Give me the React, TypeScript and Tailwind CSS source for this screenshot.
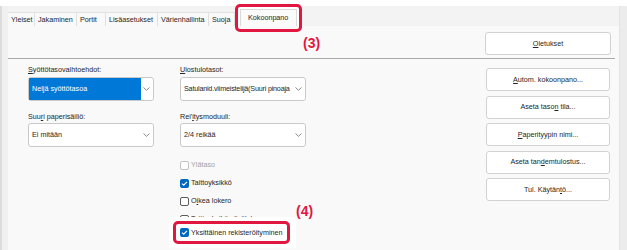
import React from 'react';

type Tab = { label: string; width: string };

const tabs: Tab[] = [
  { label: 'Yleiset', width: 'w-[27px]' },
  { label: 'Jakaminen', width: 'w-[42px]' },
  { label: 'Portit', width: 'w-[29px]' },
  { label: 'Lisäasetukset', width: 'w-[52px]' },
  { label: 'Värienhallinta', width: 'w-[51px]' },
  { label: 'Suoja', width: 'w-[26px]' },
];

const Chevron: React.FC = () => (
  <svg width="7" height="4" viewBox="0 0 7 4" className="shrink-0">
    <polyline points="0.5,0.5 3.5,3.3 6.5,0.5" fill="none" stroke="#6b6b6b" strokeWidth="0.8" />
  </svg>
);

// access key: the letter at index `at` gets an underline
const Key: React.FC<{ text: string; at: number }> = ({ text, at }) => (
  <span className="whitespace-pre">
    {text.slice(0, at)}
    <span className="underline underline-offset-[1px]">{text[at]}</span>
    {text.slice(at + 1)}
  </span>
);

const Select: React.FC<{ value: string; selected?: boolean; tight?: boolean }> = ({
  value,
  selected = false,
  tight = false,
}) => (
  <div className="flex h-[24px] w-[126px] items-stretch rounded-[3px] border border-[#c9c9c9] bg-white">
    <div
      className={
        selected
          ? 'flex flex-1 items-center overflow-hidden whitespace-nowrap bg-[#0078d7] pl-[3px] text-white'
          : tight
          ? 'flex flex-1 items-center overflow-hidden whitespace-nowrap pl-[3px] tracking-[-0.2px] text-[#262626]'
          : 'flex flex-1 items-center overflow-hidden whitespace-nowrap pl-[3px] text-[#262626]'
      }
    >
      {value}
    </div>
    <div className="flex w-[12px] items-center justify-center pr-[2px]">
      <Chevron />
    </div>
  </div>
);

const Checkbox: React.FC<{ checked?: boolean; disabled?: boolean }> = ({ checked = false, disabled = false }) =>
  checked ? (
    <div className="flex h-[9px] w-[9px] items-center justify-center rounded-[2px] bg-[#0067c0]">
      <svg width="9" height="9" viewBox="0 0 9 9">
        <polyline points="2,4.6 3.7,6.2 7,2.8" fill="none" stroke="#ffffff" strokeWidth="1.1" />
      </svg>
    </div>
  ) : (
    <div
      className={
        disabled
          ? 'h-[9px] w-[9px] rounded-[2px] border border-[#c4c4c4] bg-white'
          : 'h-[9px] w-[9px] rounded-[2px] border border-[#5c5c5c] bg-white'
      }
    />
  );

const CheckRow: React.FC<{ children: React.ReactNode; checked?: boolean; disabled?: boolean }> = ({
  children,
  checked,
  disabled,
}) => (
  <div className="flex h-[18px] items-center gap-[2px]">
    <Checkbox checked={checked} disabled={disabled} />
    <span className={disabled ? 'text-[#a3a3a3]' : 'text-[#262626]'}>{children}</span>
  </div>
);

const Button: React.FC<{ children: React.ReactNode; className?: string }> = ({ children, className = '' }) => (
  <div
    className={`flex h-[23px] items-center justify-center rounded-[3px] border border-[#d2d2d2] bg-white text-[#262626] ${className}`}
  >
    {children}
  </div>
);

export default function App() {
  return (
    <div className="relative flex h-[250px] w-[627px] flex-col overflow-hidden bg-white font-['Liberation_Sans',Arial,sans-serif] text-[7.2px] leading-[10px] text-[#262626]">
      <div className="h-[6px] shrink-0 bg-white" />
      <div className="flex flex-1">
        {/* left window edge */}
        <div className="w-[8px] border-l-2 border-[#dcdcdc] bg-[#f0f0f0]" />

        <div className="flex w-[611px] flex-col bg-[#f3f3f3]">
          {/* tab strip */}
          <div className="flex h-[20px] items-end">
            {tabs.map(t => (
              <div
                key={t.label}
                className={`flex h-[14px] items-center border-r border-t border-[#e0e0e0] bg-[#f9f9f9] pl-[3px] whitespace-nowrap ${t.width}`}
              >
                {t.label}
              </div>
            ))}
            <div className="flex h-[20px] w-[67px] items-end bg-white px-[5px]">
              <div className="flex h-[17px] w-full items-center border-x border-t border-[#dadada] bg-[#fbfbfb] pl-[7px]">
                Kokoonpano
              </div>
            </div>
          </div>

          {/* page */}
          <div className="flex flex-1 flex-col bg-[#f9f9f9]">
            <div className="mr-[4px] flex h-[33px] items-start border-b border-[#a9a9a9]">
              <div className="ml-[295px] mt-[9px] text-[14px] font-bold leading-[16px] text-[#e2173f]">(3)</div>
              <Button className="ml-auto mr-[4px] mt-[6px] w-[126px]">
                <Key text="Oletukset" at={0} />
              </Button>
            </div>

            <div className="flex">
              <div className="ml-[20px] flex w-[126px] flex-col pt-[6px]">
                <div className="h-[10px] whitespace-nowrap">
                  <Key text="Syöttötasovaihtoehdot:" at={0} />
                </div>
                <div className="mt-[2px]">
                  <Select value="Neljä syöttötasoa" selected />
                </div>
                <div className="mt-[11px] h-[10px] whitespace-nowrap">
                  <Key text="Suuri paperisäiliö:" at={3} />
                </div>
                <div className="mt-[1px]">
                  <Select value="Ei mitään" />
                </div>
              </div>

              <div className="ml-[26px] flex w-[126px] flex-col pt-[6px]">
                <div className="h-[10px] whitespace-nowrap">
                  <Key text="Ulostulotasot:" at={0} />
                </div>
                <div className="mt-[2px]">
                  <Select value="Satulanid.viimeistelijä(Suuri pinoaja" tight />
                </div>
                <div className="mt-[11px] h-[10px] whitespace-nowrap">
                  <Key text="Rei'itysmoduuli:" at={4} />
                </div>
                <div className="mt-[1px]">
                  <Select value="2/4 reikää" />
                </div>

                <div className="relative mt-[9px] flex flex-col whitespace-nowrap">
                  <CheckRow disabled>Ylätaso</CheckRow>
                  <CheckRow checked>Taittoyksikkö</CheckRow>
                  <CheckRow>
                    <Key text="Oikea lokero" at={1} />
                  </CheckRow>
                  <CheckRow>Taittoyksikön lisälokero</CheckRow>
                  <div className="relative z-10 -ml-[11px] -mt-[11px] w-[127px] bg-white p-[4px]">
                    <div className="flex h-[23px] w-[117px] items-center gap-[2px] rounded-[5px] border-[3px] border-[#e2173f] pl-[4px]">
                      <Checkbox checked />
                      <span>Yksittäinen rekisteröityminen</span>
                    </div>
                  </div>
                  <div className="absolute left-[116px] top-[47px] text-[14px] font-bold leading-[16px] text-[#e2173f]">
                    (4)
                  </div>
                </div>
              </div>

              <div className="ml-auto mr-[9px] mt-[9px] flex w-[124px] flex-col gap-[4.5px]">
                <Button>
                  <Key text="Autom. kokoonpano..." at={0} />
                </Button>
                <Button>
                  <Key text="Aseta tason tila..." at={10} />
                </Button>
                <Button>
                  <Key text="Paperityypin nimi..." at={0} />
                </Button>
                <Button>
                  <Key text="Aseta tandemtulostus..." at={9} />
                </Button>
                <Button>
                  <Key text="Tul. Käytäntö..." at={11} />
                </Button>
              </div>
            </div>
          </div>
        </div>

        {/* right window edge */}
        <div className="w-[8px] border-l border-[#e2e2e2] bg-[#ececec]" />
      </div>

      {/* callout ring around the active tab */}
      <div className="absolute left-[235px] top-[4px] h-[28px] w-[67px] rounded-[5px] border-[3px] border-[#e2173f]" />
    </div>
  );
}
